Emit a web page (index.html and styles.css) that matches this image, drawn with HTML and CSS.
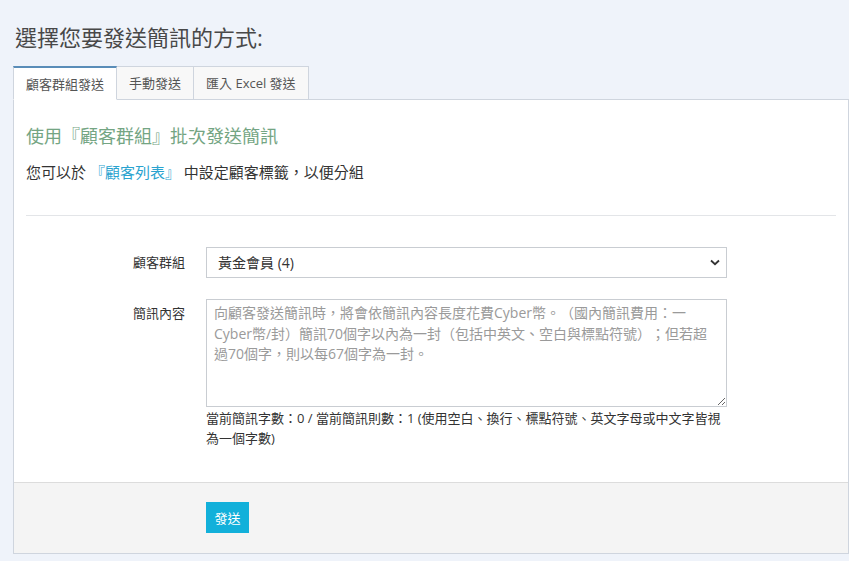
FILE: index.html
```html
<!DOCTYPE html>
<html lang="zh-Hant">
<head>
<meta charset="utf-8">
<title>發送簡訊</title>
<link rel="stylesheet" href="styles.css">
</head>
<body>
<div class="page">
  <h1 class="title">選擇您要發送簡訊的方式:</h1>
  <div class="tabs">
    <div class="tab active">顧客群組發送</div>
    <div class="tab">手動發送</div>
    <div class="tab">匯入 Excel 發送</div>
    <div class="tab-fill"></div>
  </div>
  <div class="panel">
    <div class="panel-body">
      <h2 class="lead">使用『顧客群組』批次發送簡訊</h2>
      <p class="note">您可以於 <a class="link" href="#">『顧客列表』</a> 中設定顧客標籤，以便分組</p>
      <hr class="divider">
      <div class="form">
        <label class="label label-select">顧客群組</label>
        <select class="control select">
          <option>黃金會員 (4)</option>
        </select>
        <label class="label label-text">簡訊內容</label>
        <div class="field">
          <textarea class="control textarea" placeholder="向顧客發送簡訊時，將會依簡訊內容長度花費Cyber幣。（國內簡訊費用：一Cyber幣/封）簡訊70個字以內為一封（包括中英文、空白與標點符號）；但若超過70個字，則以每67個字為一封。"></textarea>
          <div class="help">當前簡訊字數：0 / 當前簡訊則數：1 (使用空白、換行、標點符號、英文字母或中文字皆視為一個字數)</div>
        </div>
      </div>
    </div>
    <div class="panel-footer">
      <div class="footer-inner">
        <button class="btn" type="button">發送</button>
      </div>
    </div>
  </div>
</div>
</body>
</html>
```

FILE: styles.css
```css
* { box-sizing: border-box; }
html, body { margin: 0; padding: 0; }
body {
  background: #eff3fa;
  font-family: "Open Sans", "Noto Sans CJK TC", sans-serif;
  color: #333;
  width: 849px;
  height: 561px;
  overflow: hidden;
  text-spacing-trim: space-all;
}
.page {
  padding: 22px 0 0 13px;
}
.title {
  margin: 0 0 0 2px;
  font-size: 22px;
  font-weight: 400;
  line-height: 30px;
  color: #484848;
  height: 30px;
}
.tabs {
  display: flex;
  margin-top: 14px;
  height: 34px;
}
.tab {
  height: 34px;
  padding: 0 12px;
  font-size: 13px;
  line-height: 33px;
  color: #555;
  background: #f8f8f8;
  border: 1px solid #cfd5de;
  border-left: none;
  border-bottom: 1px solid #cfd5de;
  white-space: nowrap;
}
.tab.active {
  background: #fff;
  border-top: 2px solid #5a8db8;
  border-left: 1px solid #cfd5de;
  border-bottom-color: #fff;
  line-height: 32px;
}
.tab-fill {
  flex: 1;
  border-bottom: 1px solid #cfd5de;
}
.panel {
  background: #fff;
  border: 1px solid #cfd5de;
  border-top: none;
}
.panel-body {
  padding: 24px 12px 34px;
}
.lead {
  margin: 0;
  font-size: 18px;
  font-weight: 400;
  line-height: 24px;
  color: #74a583;
}
.note {
  margin: 14px 0 0;
  font-size: 15px;
  line-height: 21px;
  color: #333;
}
.link {
  color: #2aa3cf;
  text-decoration: none;
}
.divider {
  margin: 32px 0 31px;
  border: none;
  border-top: 1px solid #e3e5e8;
  height: 0;
}
.form {
  display: grid;
  grid-template-columns: 159px 521px;
  column-gap: 21px;
  row-gap: 21px;
  align-items: start;
}
.label {
  text-align: right;
  font-size: 13px;
  line-height: 20px;
  color: #333;
}
.label-select { padding-top: 5px; }
.label-text { padding-top: 4px; }
.control {
  display: block;
  width: 521px;
  border: 1px solid #c9cdd2;
  background: #fff;
  font-family: "Open Sans", "Noto Sans CJK TC", sans-serif;
  font-size: 14px;
  color: #333;
  border-radius: 0;
  outline: none;
}
.select {
  height: 31px;
  padding: 0 30px 0 11px;
  appearance: none;
  -webkit-appearance: none;
  background-image: url("data:image/svg+xml;utf8,<svg xmlns='http://www.w3.org/2000/svg' width='10' height='7' viewBox='0 0 10 7'><path d='M1 1.5 L5 5.2 L9 1.5' fill='none' stroke='%23333' stroke-width='1.8'/></svg>");
  background-repeat: no-repeat;
  background-position: right 6px center;
  background-size: 10px 7px;
}
.textarea {
  height: 108px;
  padding: 3px 7px;
  line-height: 20.5px;
  resize: vertical;
  text-spacing-trim: space-all;
}
.textarea::placeholder { color: #9a9a9a; }
.help {
  margin-top: 1px;
  font-size: 13px;
  line-height: 20px;
  color: #333;
}
.panel-footer {
  background: #f4f4f4;
  border-top: 1px solid #dcdcdc;
  padding: 19px 12px 20px;
}
.footer-inner {
  padding-left: 180px;
}
.btn {
  width: 43px;
  height: 31px;
  border: none;
  background: #12b0da;
  color: #fff;
  font-family: "Open Sans", "Noto Sans CJK TC", sans-serif;
  font-size: 13px;
  padding: 0;
  border-radius: 0;
}
```
